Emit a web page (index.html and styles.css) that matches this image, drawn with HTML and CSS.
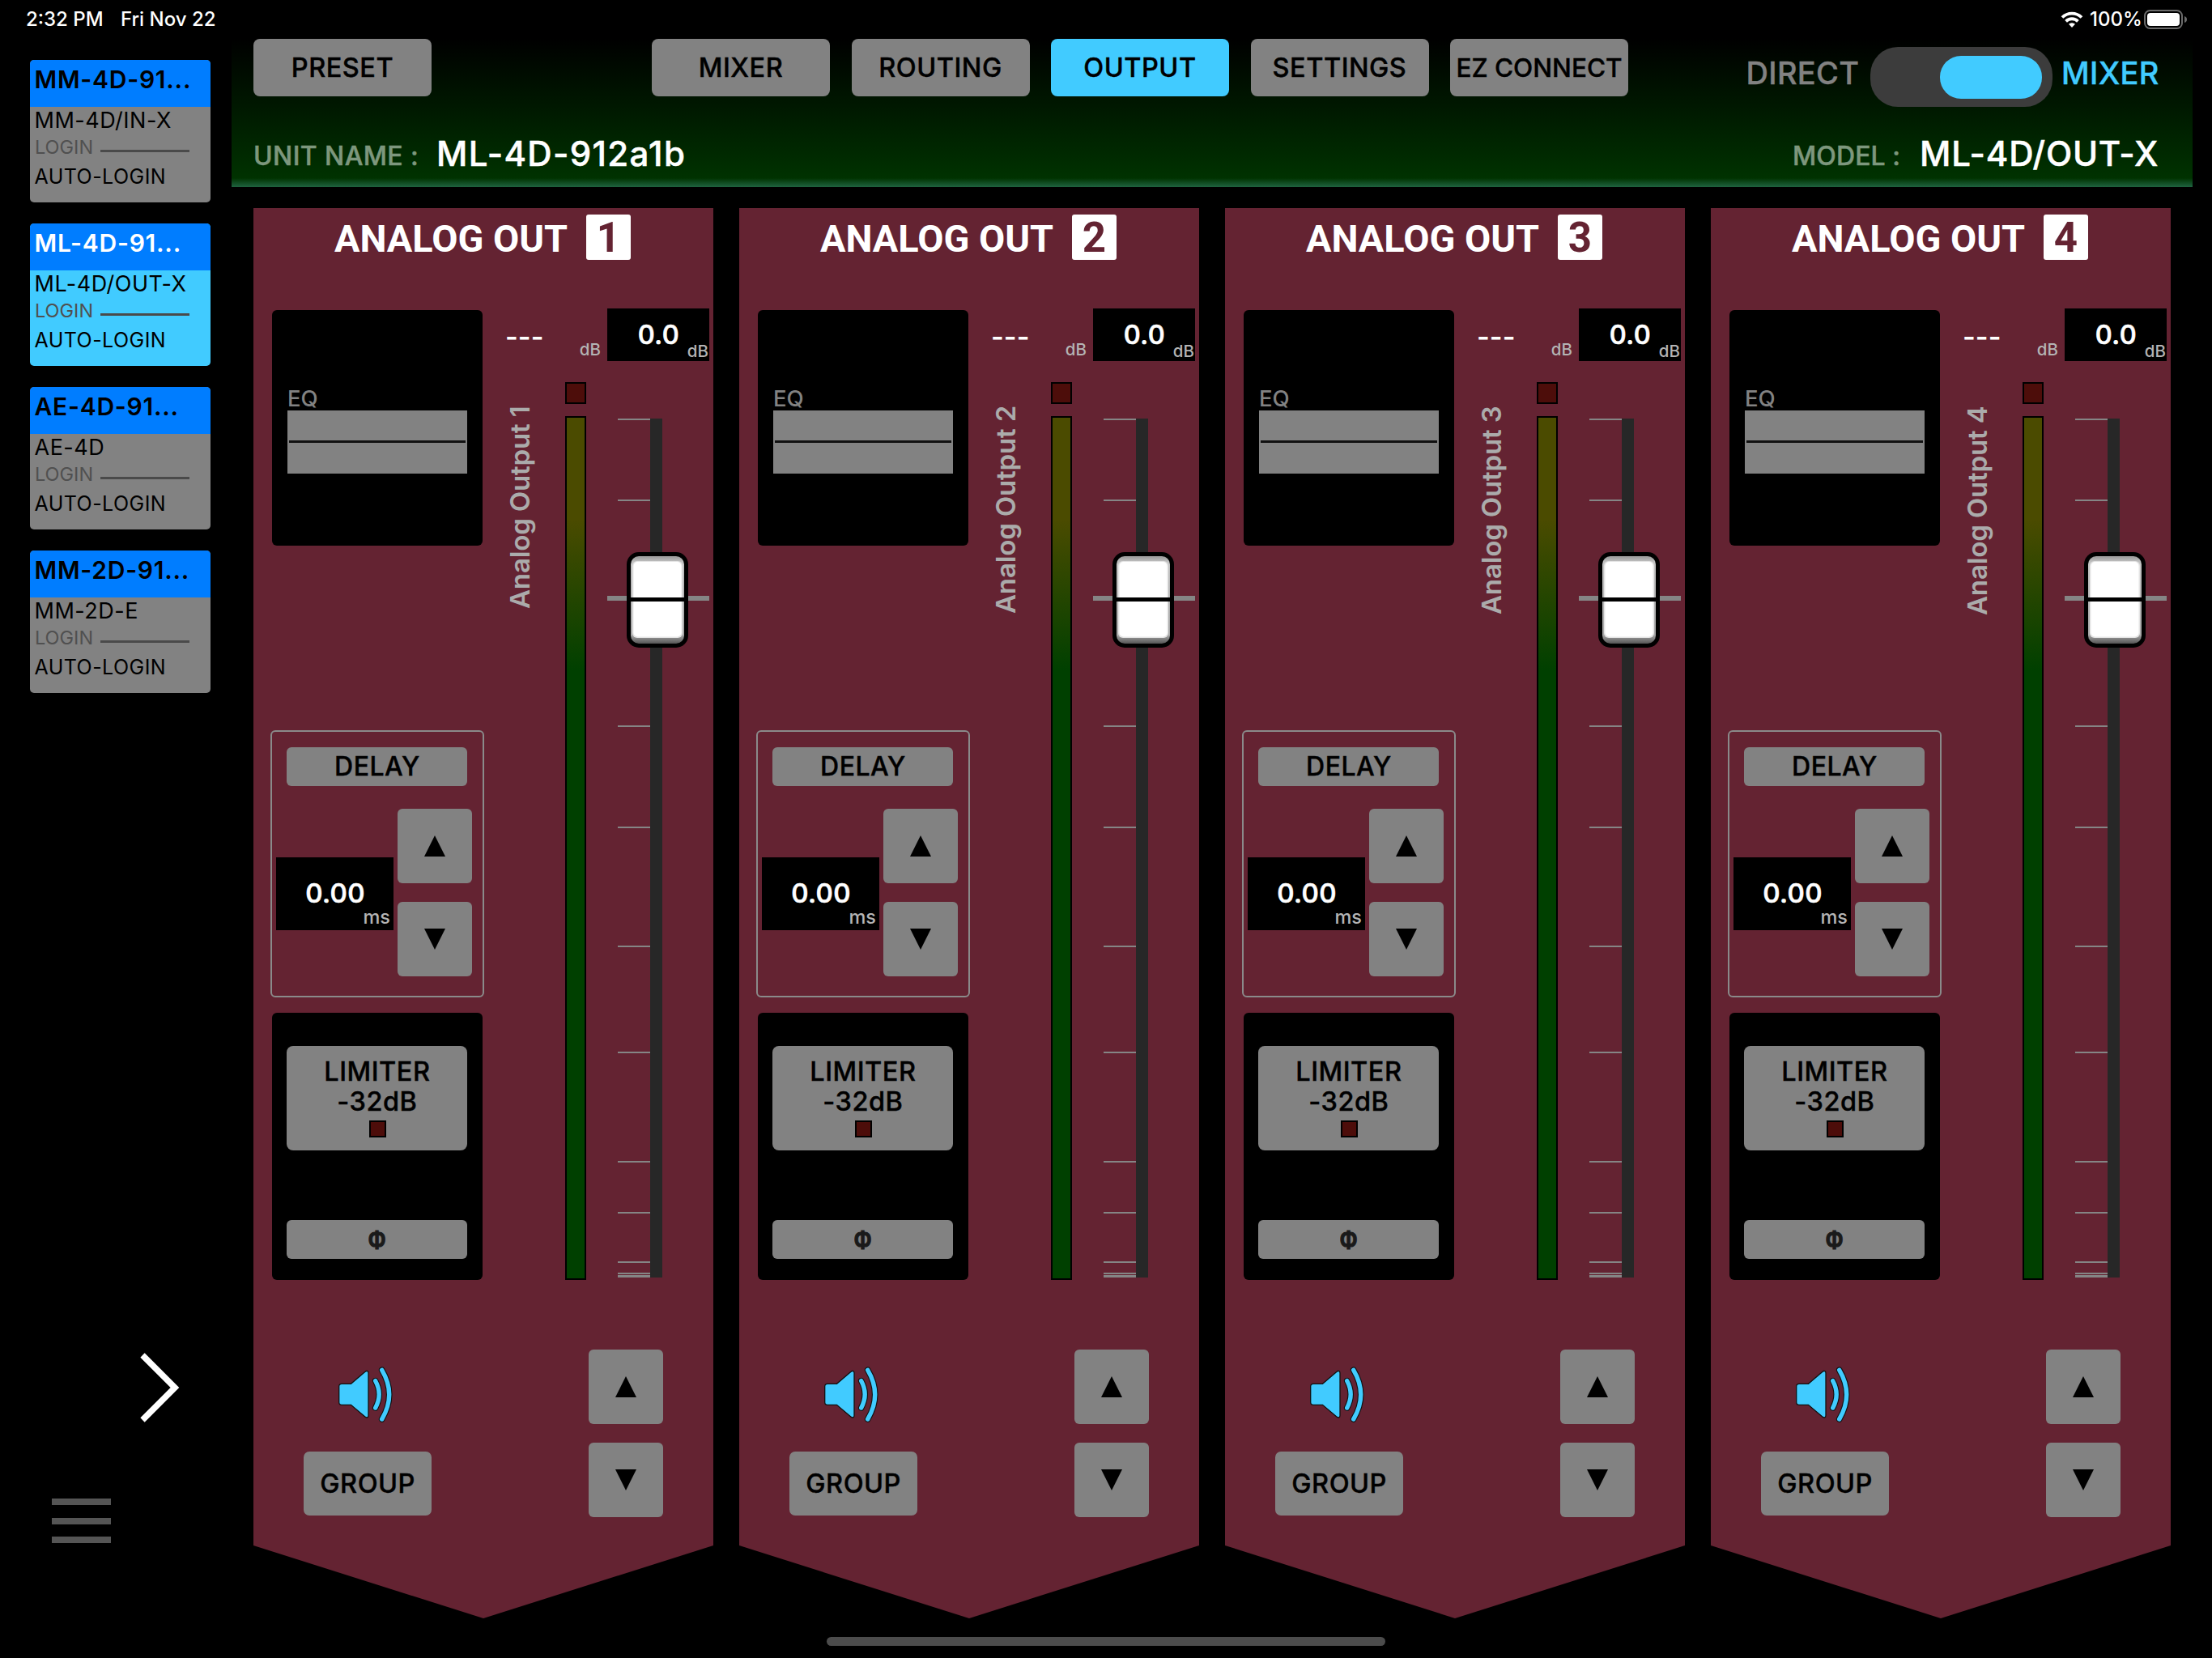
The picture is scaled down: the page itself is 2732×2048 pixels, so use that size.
FILE: index.html
```html
<!DOCTYPE html>
<html lang="en">
<head>
<meta charset="utf-8">
<title>Output</title>
<link rel="stylesheet" href="styles.css">
</head>
<body>
<svg class="defs" width="0" height="0">
  <symbol id="speaker" viewBox="0 0 78 78">
    <path d="M8 24.300h11.500L36.800 9.500c2-1.800 4.200-1 4.200 1.500v52.500c0 2.500-2.200 3.300-4.200 1.500L19.500 50.300H8c-2.200 0-3.300-1.200-3.300-3.300V27.600c0-2.200 1.100-3.300 3.300-3.300z" fill="#41cbff" stroke="#111" stroke-width="1.300"/>
    <path d="M49.700 20.700q9 16.600 0 33.300M57.700 7.300q18 30.300 0 60.700" fill="none" stroke="#111" stroke-width="7.600" stroke-linecap="round"/>
    <path d="M49.700 20.700q9 16.600 0 33.300M57.700 7.300q18 30.300 0 60.700" fill="none" stroke="#41cbff" stroke-width="5.400" stroke-linecap="round"/>
  </symbol>
  <symbol id="up" viewBox="0 0 26 26"><path d="M13 0L26 26H0z"/></symbol>
  <symbol id="down" viewBox="0 0 26 26"><path d="M13 26L26 0H0z"/></symbol>
</svg>

<div class="status">
  <span class="clock">2:32 PM</span><span class="date">Fri Nov 22</span>
  <svg class="wifi" viewBox="0 0 28 20"><path d="M14 20l-4-4.200a5.800 5.800 0 0 1 8 0z"/><path d="M6.600 12.300a10.500 10.500 0 0 1 14.800 0M2 7.500a17 17 0 0 1 24 0" fill="none" stroke="#fff" stroke-width="3.800"/></svg>
  <span class="percent">100%</span>
  <svg class="battery" viewBox="0 0 54 24"><rect x="1" y="1" width="46" height="22" rx="6.500" fill="none" stroke="#6b6b6b" stroke-width="2"/><rect x="4" y="4" width="40" height="16" rx="4" fill="#fff"/><path d="M50 8q3 1 3 4t-3 4z" fill="#6b6b6b"/></svg>
</div>

<div class="app">
  <aside class="sidebar">
    <div class="devices" id="devices"></div>
    <svg class="chevron" viewBox="0 0 50 88"><path d="M4 4l40 40L4 84" fill="none" stroke="#fff" stroke-width="7.500"/></svg>
    <div class="menu"><i></i><i></i><i></i></div>
  </aside>
  <main class="main">
    <header class="header">
      <div class="row-top">
        <button class="btn tab">PRESET</button>
        <nav class="tabs">
          <button class="btn tab">MIXER</button>
          <button class="btn tab">ROUTING</button>
          <button class="btn tab active">OUTPUT</button>
          <button class="btn tab">SETTINGS</button>
          <button class="btn tab small">EZ CONNECT</button>
        </nav>
        <div class="mode"><span class="direct">DIRECT</span><span class="toggle"><i></i></span><span class="mixer">MIXER</span></div>
      </div>
      <div class="row-unit">
        <span class="key">UNIT NAME :</span><span class="val unit">ML-4D-912a1b</span>
        <span class="key model-key">MODEL :</span><span class="val model">ML-4D/OUT-X</span>
      </div>
    </header>
    <div class="channels" id="channels"></div>
  </main>
</div>
<div class="home"></div>
<script src="app.js"></script>
</body>
</html>
```

FILE: styles.css
```css
* { box-sizing: border-box; }
body {
  margin: 0;
  width: 2732px;
  height: 2048px;
  overflow: hidden;
  background: #000;
  color: #fff;
  font-family: Inter, "Liberation Sans", sans-serif;
  position: relative;
  line-height: 1;
}
button { font: inherit; border: 0; padding: 0; color: #000; }
span { white-space: nowrap; }
svg { display: block; }
.defs { position: absolute; }

.status {
  height: 48px;
  padding: 0 30px 0 32px;
  display: flex;
  align-items: center;
  font-size: 24px;
  font-weight: 500;
}
.status > * { margin-top: -1px; }
.clock { width: 117px; }
.date { margin-right: auto; }
.wifi { width: 28px; height: 20px; fill: #fff; margin-right: 8px; }
.percent { width: 67px; }
.battery { width: 54px; height: 24px; }

.app { display: flex; height: 2000px; }
.sidebar { width: 286px; padding: 26px 0 0 37px; display: flex; flex-direction: column; }
.devices { display: flex; flex-direction: column; gap: 25.900px; height: 1597px; }
.device { width: 223px; height: 176px; border-radius: 5px; background: #828282; color: #000; overflow: hidden; }
.device.active { background: #41cbff; }
.device .name { height: 58px; background: #007dff; padding: 9px 0 0 5.500px; font-size: 30px; line-height: 30px; font-weight: 600; letter-spacing: .75px; }
.device.active .name { color: #fff; }
.device .kind { padding: 3px 0 0 5.500px; font-size: 27px; line-height: 28px; letter-spacing: .5px; }
.device .login { display: flex; padding: 7px 0 0 6px; font-size: 23.500px; line-height: 24px; color: #505050; height: 33px; }
.device .login i { width: 110px; height: 3px; background: #4a4a4a; margin: 15px 26px 0 auto; }
.device .auto { padding: 9px 0 0 5.500px; font-size: 25px; line-height: 26px; letter-spacing: .45px; }
.chevron { width: 50px; height: 88px; margin: -1px 0 0 135px; }
.menu { display: flex; flex-direction: column; gap: 15.500px; margin: 93px 0 0 27px; }
.menu i { width: 73px; height: 8px; background: #555; }

.main { flex: 1; display: flex; flex-direction: column; }
.header {
  width: 2422px;
  height: 183px;
  background: linear-gradient(to bottom, #000 0, #003200 172px, #1f6340 183px);
  padding: 0 42px 0 27px;
}
.row-top { display: flex; }
.btn { background: #828282; border-radius: 8px; display: flex; align-items: center; justify-content: center; color: #000; font-weight: 500; font-size: 32.500px; letter-spacing: .5px; -webkit-text-stroke: .4px currentColor; }
.tab { width: 220px; height: 71px; padding-top: 1px; }
.tab.small { font-size: 31.500px; letter-spacing: 0; }
.tabs { display: flex; gap: 26.500px; margin-left: 272px; }
.tab.active { background: #41cbff; }
.mode { display: flex; margin-left: auto; font-size: 38px; font-weight: 500; line-height: 38px; padding-top: 10px; letter-spacing: .3px; -webkit-text-stroke: .4px currentColor; }
.direct { color: #828282; width: 153.500px; padding-top: 13px; }
.mixer { color: #41cbff; padding: 13px 0 0 0; width: 120px; margin-left: 11px; }
.toggle { width: 225px; height: 74px; border-radius: 34px; background: #3c3c3c; padding: 11px 0 0 86px; }
.toggle i { display: block; width: 126px; height: 53px; border-radius: 26px; background: #41cbff; }
.row-unit { display: flex; align-items: baseline; padding-top: 37px; -webkit-text-stroke: .5px currentColor; }
.key { font-size: 32px; font-weight: 500; color: #7d977d; width: 226px; letter-spacing: .4px; position: relative; top: -1px; }
.val { font-size: 42px; line-height: 42px; font-weight: 500; letter-spacing: 1.350px; }
.unit { margin-right: auto; }
.model-key { width: 157px; letter-spacing: .1px; }
.model { width: 295px; letter-spacing: .8px; }

.channels { display: flex; gap: 32px; padding: 26px 0 0 27px; }
.channel {
  width: 568px;
  height: 1742px;
  background: #642332;
  clip-path: polygon(0 0, 100% 0, 100% 1652px, 50% 100%, 0 1652px);
  display: grid;
  grid-template-columns: 264px 1fr 126px;
  grid-template-rows: 124px 1208px 1fr;
  padding: 0 5px 0 21px;
}
.title { grid-column: 1 / -1; display: flex; padding: 8px 0 0 79px; font-family: Roboto, sans-serif; font-weight: 700; font-size: 46.800px; line-height: 60px; }
.title .txt { width: 311px; }
.title .num { width: 55px; height: 56px; line-height: 58px; background: #fff; color: #642332; border-radius: 3px; text-align: center; font-size: 51px; }

.left { display: flex; flex-direction: column; }
.box { background: #000; border-radius: 6px; margin: 0 2px; }
.eq { height: 291px; margin-top: 2px; padding: 95px 19px 0; color: #828282; font-size: 27.500px; line-height: 28px; font-weight: 500; }
.eq .graph { height: 78px; margin-top: 1px; background: #828282; display: flex; align-items: center; padding: 0 2px 2px; }
.eq .graph i { height: 3px; flex: 1; background: #111; }
.delay { margin-top: 228px; height: 330px; border: 2px solid #8a8a8a; border-radius: 6px; padding: 19px 0 0 5px; }
.delay .btn.label { width: 223px; height: 48px; margin-left: 13.400px; border-radius: 6px; font-size: 32px; }
.delay .body { display: flex; gap: 4.500px; margin-top: 28px; }
.read { background: #000; position: relative; display: flex; justify-content: center; font-weight: 500; -webkit-text-stroke: .7px currentColor; letter-spacing: .4px; }
.read small { position: absolute; font-weight: 500; color: #b4b4b4; -webkit-text-stroke: 0; letter-spacing: 0; }
.delay .read { width: 145px; height: 90px; margin-top: 60px; padding: 28px 0 0 1px; font-size: 33px; line-height: 33px; }
.delay .read small { right: 4px; bottom: 4px; font-size: 23.500px; line-height: 24px; }
.steps { display: flex; flex-direction: column; gap: 23px; }
.step { width: 92px; height: 92px; border-radius: 6px; }
.step svg { width: 26px; height: 26px; }
.limit { height: 330px; margin-top: 19px; padding: 41px 18px 0 18.400px; }
.limit .big { width: 223px; height: 129px; flex-direction: column; justify-content: flex-start; padding-top: 14px; line-height: 36.500px; }
.led { width: 26px; height: 27px; border: 2px solid #000; background: #4d0d0a; }
.limit .led { width: 21px; height: 21px; margin: 5px 0 0 2px; }
.limit .phi { width: 223px; height: 48px; margin-top: 86px; border-radius: 6px; color: #1a1a1a; font-size: 33px; font-weight: 700; font-family: "Liberation Sans", sans-serif; -webkit-text-stroke: 1.200px currentColor; }
.phi span { transform: scaleX(.78); }

.mid { display: grid; grid-template-columns: 1fr 26px; padding-left: 27px; padding-right: 26px; grid-template-rows: 91px 1fr; }
.peak { grid-column: 1 / -1; display: flex; justify-content: space-between; }
.dashes { font-size: 34px; line-height: 34px; font-weight: 600; padding: 18px 0 0 0; margin-left: -1px; }
.peak .db { font-size: 20.500px; line-height: 20px; font-weight: 500; color: #b4b4b4; padding-top: 41px; margin-right: -18px; }
.vname { writing-mode: vertical-rl; transform: rotate(180deg); font-size: 33px; line-height: 42px; width: 42px; font-weight: 600; color: #ababab; height: 264px; text-align: right; margin: 29px 0 0 -4px; letter-spacing: -.15px; }
.meter { display: flex; flex-direction: column; gap: 15px; }
.bar { height: 1067px; border: 2px solid #000; background: linear-gradient(to bottom, #4b4b00 0, #4b4b00 125px, #004000 312px); }

.fader { display: flex; flex-direction: column; }
.fader .read { height: 65px; padding: 17px 0 0 1px; font-size: 32.500px; line-height: 32px; }
.fader .read small { right: 1px; bottom: 2px; font-size: 20.500px; line-height: 20px; }
.travel { position: relative; margin: 71px 0 0; height: 1061px; padding-left: 53px; }
.rail { width: 15px; height: 1061px; background: #272727; }
.tick { position: absolute; left: 13px; width: 40px; height: 2px; background: #858585; }
.zero { position: absolute; left: 0; top: 219px; width: 126px; height: 6px; background: #858585; }
.knob { position: absolute; left: 23.500px; top: 165px; width: 76px; height: 118px; }

.foot { grid-column: 1 / -1; display: flex; justify-content: space-between; padding: 78px 57.500px 0 41.400px; }
.foot .speaker { width: 78px; height: 78px; margin: 18px 0 0 38.600px; }
.foot .group { width: 157.500px; height: 79px; margin-top: 30px; border-radius: 7px; padding-top: 1px; }

.home { position: absolute; left: 1021px; top: 2022px; width: 690px; height: 11px; border-radius: 5.500px; background: #4c4c4c; }
```

FILE: app.js
```js
const devices = [
  ["MM-4D-91...", "MM-4D/IN-X"],
  ["ML-4D-91...", "ML-4D/OUT-X", true],
  ["AE-4D-91...", "AE-4D"],
  ["MM-2D-91...", "MM-2D-E"],
];
document.getElementById("devices").innerHTML = devices.map(([name, kind, on]) => `
  <div class="device${on ? " active" : ""}">
    <div class="name"><span>${name}</span></div>
    <div class="kind"><span>${kind}</span></div>
    <div class="login"><span>LOGIN</span><i></i></div>
    <div class="auto"><span>AUTO-LOGIN</span></div>
  </div>`).join("");

// Fader scale marks, in pixels from the top of the rail
const ticks = [0, 100, 379, 504, 651, 782, 917, 980, 1041, 1055, 1058, 1059];
const icon = (id) => `<svg><use href="#${id}"/></svg>`;
const steps = `<div class="steps"><button class="btn step">${icon("up")}</button><button class="btn step">${icon("down")}</button></div>`;

document.getElementById("channels").innerHTML = [1, 2, 3, 4].map((n) => `
  <section class="channel">
    <div class="title"><span class="txt">ANALOG OUT</span><span class="num">${n}</span></div>
    <div class="left">
      <div class="box eq">EQ<div class="graph"><i></i></div></div>
      <div class="delay">
        <button class="btn label">DELAY</button>
        <div class="body"><div class="read">0.00<small>ms</small></div>${steps}</div>
      </div>
      <div class="box limit">
        <button class="btn big"><span>LIMITER</span><span>-32dB</span><i class="led"></i></button>
        <button class="btn phi"><span>Φ</span></button>
      </div>
    </div>
    <div class="mid">
      <div class="peak"><span class="dashes">---</span><span class="db">dB</span></div>
      <span class="vname">Analog Output ${n}</span>
      <div class="meter"><i class="led"></i><div class="bar"></div></div>
    </div>
    <div class="fader">
      <div class="read">0.0<small>dB</small></div>
      <div class="travel">
        <div class="rail"></div>
        ${ticks.map((t) => `<i class="tick" style="top:${t}px"></i>`).join("")}
        <i class="zero"></i>
        <svg class="knob" viewBox="0 0 76 118">
          <defs><linearGradient id="cap${n}" x1="0" y1="0" x2="0" y2="1"><stop offset="0" stop-color="#999"/><stop offset=".07" stop-color="#c4c4c4"/><stop offset=".9" stop-color="#a8a8a8"/><stop offset="1" stop-color="#555"/></linearGradient></defs>
          <rect width="76" height="118" rx="15" fill="#000"/>
          <rect x="5" y="5" width="66" height="108" rx="10" fill="url(#cap${n})"/>
          <rect x="7" y="11" width="62" height="95" rx="6" fill="#e4e4e4"/>
          <rect x="8.500" y="12" width="59" height="92.500" rx="5" fill="#fff"/>
          <rect x="4" y="56" width="68" height="5" fill="#000"/>
        </svg>
      </div>
    </div>
    <div class="foot">
      <div><svg class="speaker"><use href="#speaker"/></svg><button class="btn group">GROUP</button></div>
      ${steps}
    </div>
  </section>`).join("");
```
